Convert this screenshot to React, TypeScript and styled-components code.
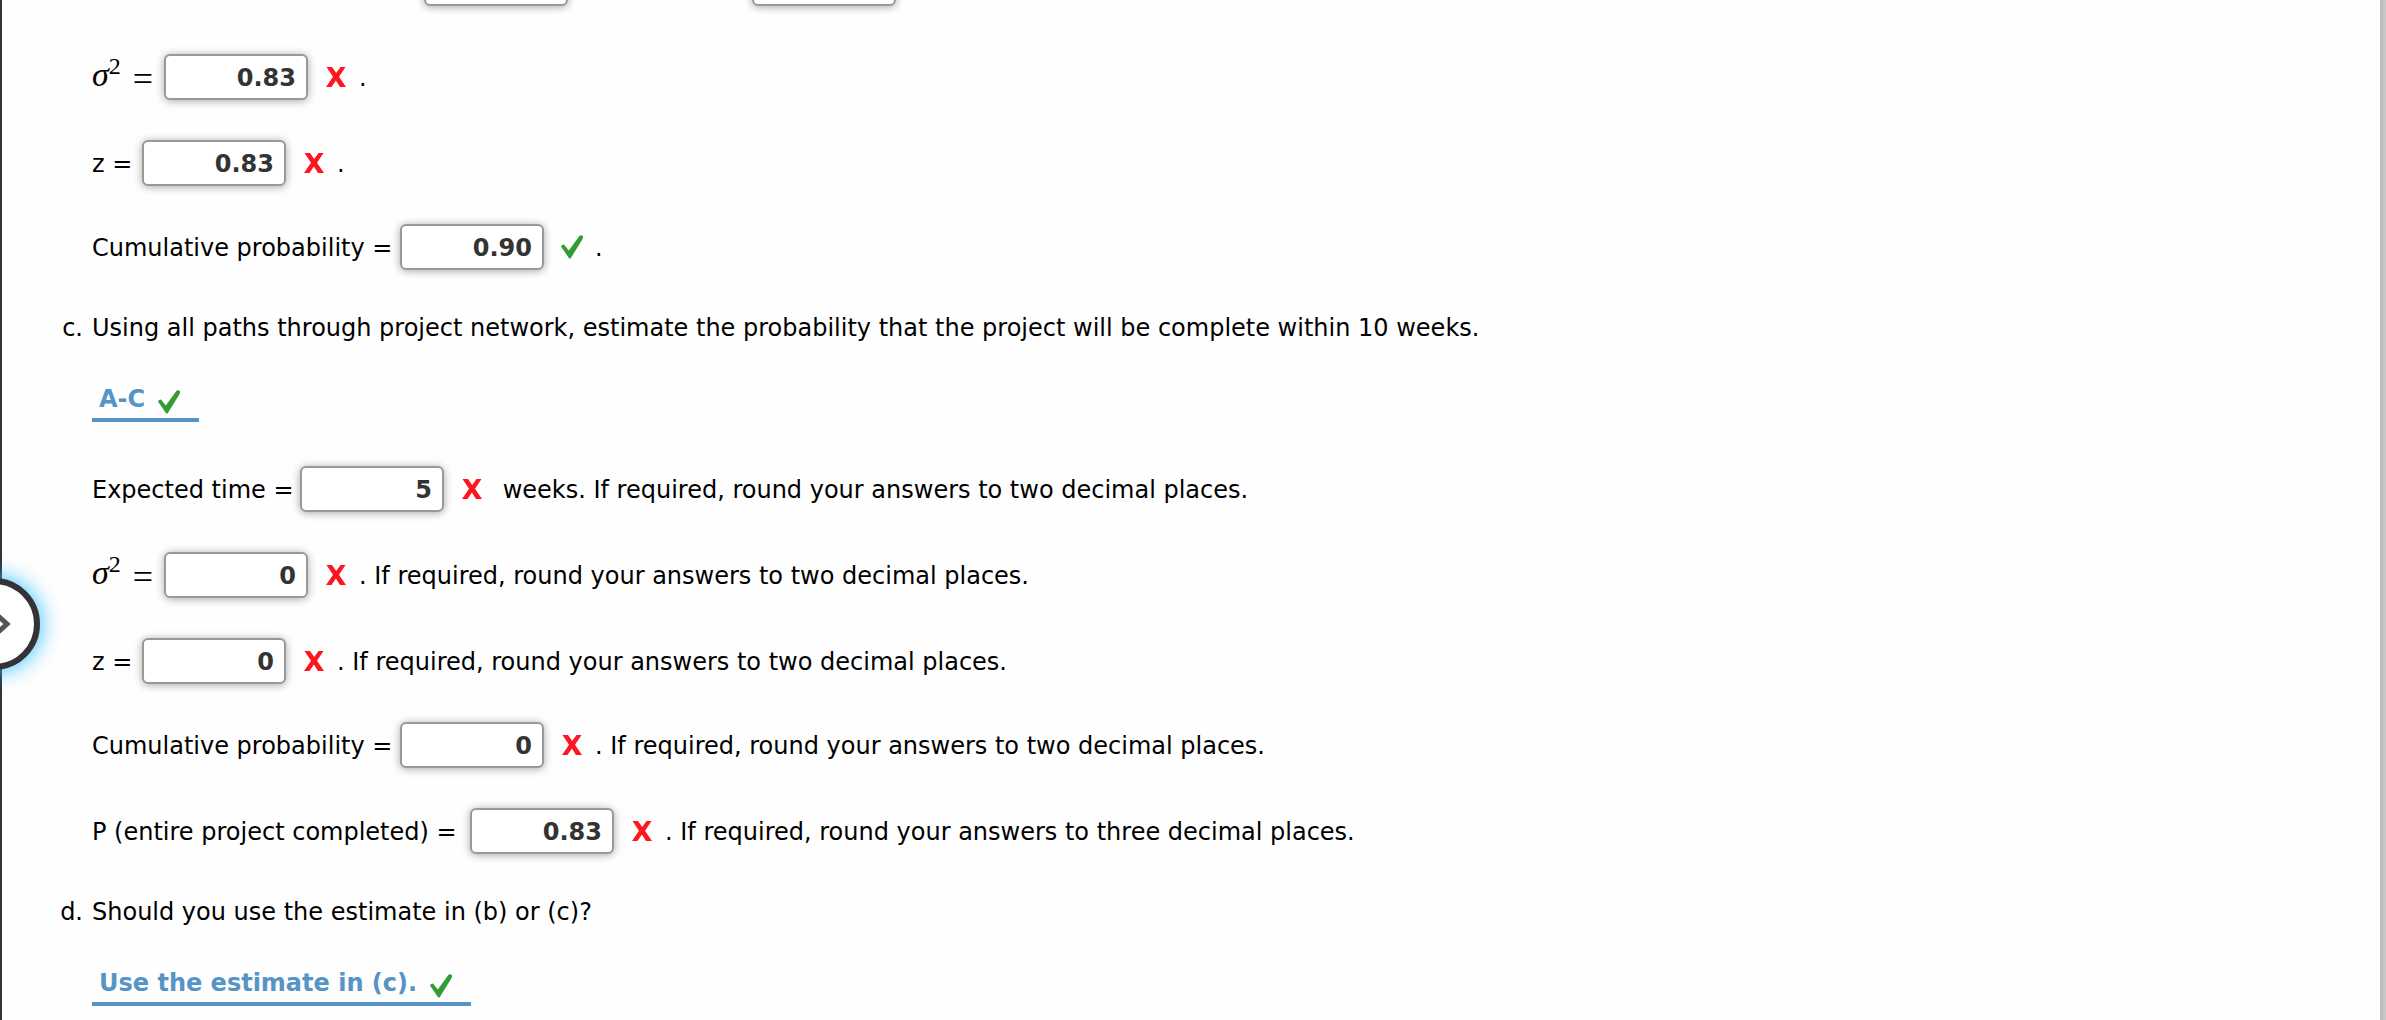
import React, { useId, useState } from "react";
import styled, { createGlobalStyle } from "styled-components";

const GlobalStyle = createGlobalStyle`
  * { box-sizing: border-box; }
  body {
    margin: 0;
    background: #fefefe;
    color: #000;
    font: 24px/30px Verdana, "DejaVu Sans", sans-serif;
  }
`;

const Page = styled.div`
  position: relative;
  min-height: 100vh;
  overflow: hidden;
  padding-right: 6px;
  background: linear-gradient(to left, #cacaca, #bababa 6px);
`;

const Assignment = styled.main`
  display: flow-root;
  min-height: 100vh;
  padding: 0 24px 14px 90px;
  border-left: 2px solid #333;
  background: #fefefe;
`;

const CutOffRow = styled.div`
  display: flex;
  gap: 184px;
  margin: -40px 0 48px;
  padding-left: 332px;
`;

const Rows = styled.div`
  display: flex;
  flex-direction: column;
`;

const Row = styled.div<{ $tight?: boolean }>`
  display: flex;
  align-items: baseline;
  margin-bottom: ${(p) => (p.$tight ? 38 : 40)}px;
  white-space: pre;

  &:last-child {
    margin-bottom: 0;
  }
`;

const Label = styled.label<{ $width: number }>`
  flex: none;
  width: ${(p) => p.$width}px;
`;

const Formula = styled.span`
  display: flex;
  align-items: baseline;
  font: 32px/30px "Liberation Serif", serif;

  i {
    font-size: 34px;
  }
`;

const Power = styled.sup`
  align-self: flex-start;
  margin-right: 12px;
  font-size: 24px;
  line-height: 12px;
`;

const Equals = styled.span`
  align-self: flex-start;
  padding-top: 4px;
  font-size: 36px;
`;

const Answer = styled.input`
  width: 144px;
  height: 46px;
  padding: 2px 10px 0;
  border: 2px solid #999;
  border-radius: 6px;
  background: #fff;
  box-shadow: 0 1px 8px rgba(0, 0, 0, 0.35);
  color: #333;
  font: bold 24px/30px Verdana, "DejaVu Sans", sans-serif;
  text-align: right;
`;

const MarkBox = styled.svg`
  flex: none;
  width: 24px;
  height: 24px;
`;

const MarkSlot = styled.span`
  display: flex;
  align-self: center;
  margin: 0 11px 0 16px;
`;

const Question = styled.h2`
  display: flex;
  margin: 43px 0 41px -38px;
  font: inherit;
`;

const Letter = styled.span`
  width: 29px;
  margin-right: 9px;
  text-align: right;
`;

const Choice = styled.button`
  display: flex;
  align-items: flex-end;
  gap: 12px;
  padding: 0 18px 4px 7px;
  border: 0;
  border-bottom: 4px solid #5594c6;
  background: none;
  color: #5594c6;
  font: bold 24px/30px Verdana, "DejaVu Sans", sans-serif;
`;

const AfterChoice = styled(Rows)`
  margin-top: 44px;
`;

const DrawerToggle = styled.button`
  position: absolute;
  top: 578px;
  left: -52px;
  display: flex;
  align-items: center;
  justify-content: flex-end;
  width: 92px;
  height: 92px;
  padding: 0 23px 0 0;
  border: 6px solid #333;
  border-radius: 50%;
  background: #fff;
  box-shadow: 0 0 22px #2bbcff;
`;

function Mark({ right }: { right?: boolean }) {
  return right ? (
    <MarkBox viewBox="0 0 24 24" role="img" aria-label="Correct">
      <path
        d="M1 11.500 Q1.500 9.500 4 9.500 L8.800 15.500 L19.500 0.800 Q21 -0.500 23 1 Q23.500 2.500 22 5 L11.500 22 Q10 25 8.500 22.500 Z"
        fill="#339c35"
      />
    </MarkBox>
  ) : (
    <MarkBox viewBox="0 0 24 24" role="img" aria-label="Incorrect">
      <path
        d="M2.500 2 H8 L12.200 8 L16.500 2 H21.500 L15 11.700 L22 22 H16 L11.900 15.600 L7.500 22 H2 L9 11.800Z"
        fill="#ff1520"
      />
    </MarkBox>
  );
}

const Sigma = () => (
  <Formula>
    <i>σ</i>
    <Power>2</Power>
    <Equals>=</Equals>
  </Formula>
);

type FieldProps = {
  label: React.ReactNode;
  labelWidth: number;
  value: string;
  after: string;
  right?: boolean;
  tight?: boolean;
};

function Field({ label, labelWidth, value, after, right, tight }: FieldProps) {
  const id = useId();
  const [text, setText] = useState(value);
  return (
    <Row $tight={tight}>
      <Label htmlFor={id} $width={labelWidth}>
        {label}
      </Label>
      <Answer id={id} value={text} onChange={(e) => setText(e.target.value)} />
      <MarkSlot>
        <Mark right={right} />
      </MarkSlot>
      <span>{after}</span>
    </Row>
  );
}

const TWO = "If required, round your answers to two decimal places.";
const THREE = "If required, round your answers to three decimal places.";

export default function App() {
  return (
    <>
      <GlobalStyle />
      <Page>
        <Assignment>
          <CutOffRow>
            <Answer aria-label="First term" />
            <Answer aria-label="Second term" />
          </CutOffRow>
          <Rows>
            <Field label={<Sigma />} labelWidth={72} value="0.83" after="." />
            <Field label="z =" labelWidth={50} value="0.83" after="." tight />
            <Field label="Cumulative probability =" labelWidth={308} value="0.90" after="." right />
          </Rows>

          <Question>
            <Letter>c.</Letter>
            Using all paths through project network, estimate the probability that the project will
            be complete within 10 weeks.
          </Question>
          <Choice>
            A-C <Mark right />
          </Choice>
          <AfterChoice>
            <Field label="Expected time =" labelWidth={208} value="5" after={" weeks. " + TWO} />
            <Field label={<Sigma />} labelWidth={72} value="0" after={". " + TWO} />
            <Field label="z =" labelWidth={50} value="0" after={". " + TWO} tight />
            <Field
              label="Cumulative probability ="
              labelWidth={308}
              value="0"
              after={". " + TWO}
            />
            <Field
              label="P (entire project completed) ="
              labelWidth={378}
              value="0.83"
              after={". " + THREE}
            />
          </AfterChoice>

          <Question>
            <Letter>d.</Letter>
            Should you use the estimate in (b) or (c)?
          </Question>
          <Choice>
            Use the estimate in (c). <Mark right />
          </Choice>
        </Assignment>
        <DrawerToggle aria-label="Open side panel">
          <svg width="16" height="24" viewBox="0 0 16 24" fill="none" stroke="#555" strokeWidth="5">
            <path d="M2 3 L12 12 L2 21" />
          </svg>
        </DrawerToggle>
      </Page>
    </>
  );
}
